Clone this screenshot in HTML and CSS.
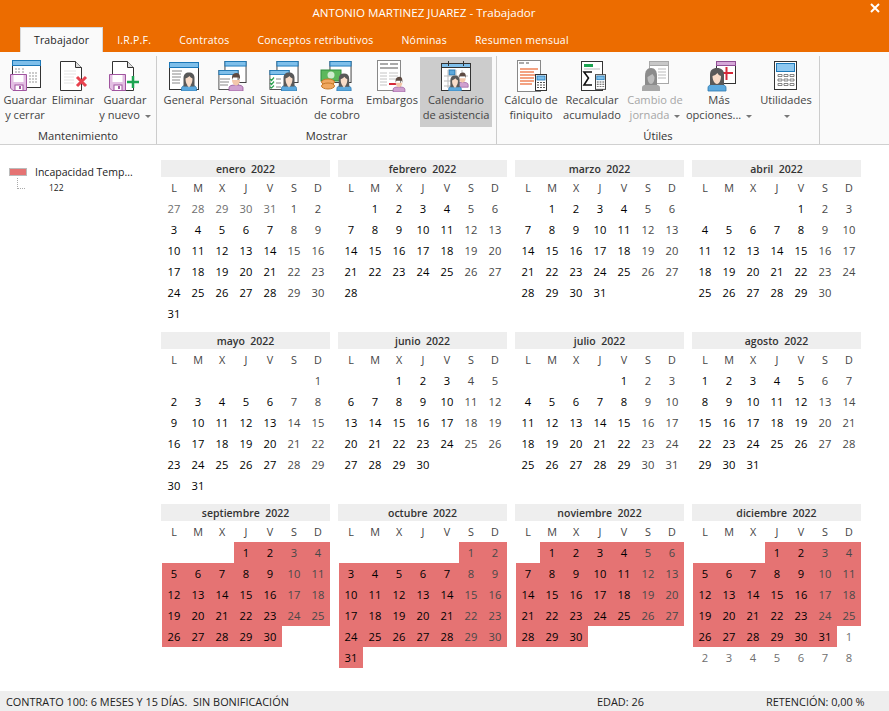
FILE: index.html
```html
<!DOCTYPE html>
<html lang="es">
<head>
<meta charset="utf-8">
<title>Trabajador</title>
<link rel="stylesheet" href="styles.css">
</head>
<body>
<svg class="sprite" aria-hidden="true">
  <symbol id="floppy" viewBox="0 0 17 17">
    <path d="M.5.5h16v16H3L.5 14z" fill="#e3bfe3" stroke="#a0559f"/>
    <rect x="3.500" y="1" width="10" height="7" fill="#fff"/>
    <rect x="5" y="11" width="8" height="5.500" fill="#fff" stroke="#a0559f"/>
    <rect x="9" y="12" width="2" height="3" fill="#a0559f"/>
  </symbol>
  <symbol id="woman" viewBox="0 0 16 19">
    <path d="M.5 19v-2.500c0-2.500 3-3.500 7.500-3.500s7.500 1 7.500 3.500V19z" fill="#5ba8dd" stroke="#2b78b0" stroke-width=".8"/>
    <path d="M2.500 14.500V6c0-3.500 2-5.500 5.500-5.500S13.500 2.500 13.500 6v8.500z" fill="#595959"/>
    <path d="M4.500 6.500c1.500-.5 3-1.200 4-2.500.5 1.200 2 2 3 2.500 0 3.500-1 7-3.500 7s-3.500-3.500-3.500-7z" fill="#f9dcc8"/>
    <path d="M6 13l2 2.500 2-2.500z" fill="#f9dcc8"/>
  </symbol>
  <symbol id="man" viewBox="0 0 16 19">
    <path d="M1 19v-3c0-2.500 3-3 7-3s7 .5 7 3v3z" fill="#cfa0cf" stroke="#95559a" stroke-width=".8"/>
    <path d="M4 8c0 3 2 5.500 4 5.500S12 11 12 8z" fill="#f3c7ab"/>
    <path d="M4 8V5c0-2.500 2-4 4.500-4S12 3 12 5v3l-1-2.500H5z" fill="#5d4a42"/>
  </symbol>
  <symbol id="calc" viewBox="0 0 12 17">
    <rect x=".5" y=".5" width="11" height="16" fill="#fff" stroke="#333"/>
    <rect x="2" y="2" width="8" height="4" fill="#7fbfea" stroke="#1c78b8" stroke-width=".8"/>
    <path d="M2 8h2v1H2zm3 0h2v1H5zm3 0h2v1H8zM2 10.500h2v1H2zm3 0h2v1H5zm3 0h2v1H8zM2 13h2v1H2zm3 0h2v1H5zm3 0h2v1H8z" fill="#555"/>
  </symbol>
  <symbol id="win" viewBox="0 0 24 24">
    <rect x=".5" y=".5" width="23" height="23" fill="#fff" stroke="#333"/>
    <rect x=".5" y=".5" width="23" height="5" fill="#7fbfea" stroke="#1c78b8"/>
  </symbol>
</svg>

<div class="app">
  <header class="titlebar">
    <div class="title">ANTONIO MARTINEZ JUAREZ - Trabajador</div>
    <svg class="close" viewBox="0 0 10 10"><path d="M1 1l8 8M9 1l-8 8" stroke="#fff" stroke-width="2"/></svg>
    <nav class="tabs">
      <span class="tab active">Trabajador</span>
      <span class="tab">I.R.P.F.</span>
      <span class="tab">Contratos</span>
      <span class="tab">Conceptos retributivos</span>
      <span class="tab">Nóminas</span>
      <span class="tab">Resumen mensual</span>
    </nav>
  </header>

  <section class="ribbon">
    <div class="group g1">
      <div class="btns">
        <div class="btn w46">
          <svg class="ico" viewBox="0 0 34 34">
            <rect x="4.500" y="2.500" width="28" height="27" fill="#fff" stroke="#333"/>
            <rect x="4.500" y="2.500" width="28" height="5" fill="#7fbfea" stroke="#1c78b8"/>
            <path d="M7 11h5M14 11h3M7 14h5M14 14h3M21 15h9M21 18h9M21 21h9M21 24h9" stroke="#999" stroke-dasharray="2 1"/>
            <use href="#floppy" x="2" y="16" width="17" height="17"/>
          </svg>
          <span>Guardar<br>y cerrar</span>
        </div>
        <div class="btn w50">
          <svg class="ico" viewBox="0 0 34 34">
            <path d="M4.500 3.500h15l6 6v23h-21z" fill="#fff" stroke="#333"/>
            <path d="M19.500 3.500v6h6" fill="#ddd" stroke="#333"/>
            <path d="M8 13h12M8 16h12M8 19h10M8 22h10M8 25h10" stroke="#e4e4e4"/>
            <path d="M21 19l9 9M30 19l-9 9" stroke="#e8434f" stroke-width="3"/>
          </svg>
          <span>Eliminar</span>
        </div>
        <div class="btn w54">
          <svg class="ico" viewBox="0 0 34 34">
            <path d="M4.500 3.500h15l6 6v23h-21z" fill="#fff" stroke="#333"/>
            <path d="M19.500 3.500v6h6" fill="#ddd" stroke="#333"/>
            <use href="#floppy" x="1" y="16" width="17" height="17"/>
            <path d="M19 24h12M25 18v12" stroke="#1ca451" stroke-width="2.500"/>
          </svg>
          <span>Guardar<br>y nuevo <i class="caret"></i></span>
        </div>
      </div>
      <div class="glabel">Mantenimiento</div>
    </div>

    <div class="group g2">
      <div class="btns">
        <div class="btn w44">
          <svg class="ico" viewBox="0 0 34 34">
            <rect x="2.500" y="4.500" width="29" height="27" fill="#fff" stroke="#333"/>
            <rect x="2.500" y="4.500" width="29" height="5" fill="#7fbfea" stroke="#1c78b8"/>
            <path d="M5 13h10M5 16h9M5 19h9M5 22h8M5 25h8" stroke="#888"/>
            <use href="#woman" x="14" y="14" width="16" height="19"/>
          </svg>
          <span>General</span>
        </div>
        <div class="btn w52">
          <svg class="ico" viewBox="0 0 34 34">
            <use href="#win" x="9" y="3" width="23" height="22"/>
            <use href="#win" x="2" y="12" width="23" height="20"/>
            <path d="M5 21h10M5 24h9M5 27h8" stroke="#888"/>
            <use href="#man" x="13" y="14" width="16" height="19"/>
          </svg>
          <span>Personal</span>
        </div>
        <div class="btn w52">
          <svg class="ico" viewBox="0 0 34 34">
            <use href="#win" x="9" y="3" width="23" height="22"/>
            <use href="#win" x="1" y="12" width="23" height="20"/>
            <path d="M3 21l1.500 1.500L7 19.500M3 25l1.500 1.500L7 23.500M3 29l1.500 1L7 27.500" stroke="#2aa24f" fill="none" stroke-width="1.200"/>
            <path d="M9 21h5M9 25h5M9 29h5" stroke="#888"/>
            <use href="#woman" x="14" y="14" width="16" height="19"/>
          </svg>
          <span>Situación</span>
        </div>
        <div class="btn w54">
          <svg class="ico" viewBox="0 0 34 34">
            <use href="#win" x="9" y="3" width="23" height="22"/>
            <rect x="1" y="12" width="20" height="11" fill="#5cb85c" stroke="#2e8b3e"/>
            <circle cx="11" cy="17" r="3.500" fill="#cfeccf"/>
            <ellipse cx="8" cy="24" rx="6.500" ry="3" fill="#f0a860" stroke="#c87a28"/>
            <ellipse cx="8" cy="28" rx="6.500" ry="3" fill="#f0a860" stroke="#c87a28"/>
            <use href="#woman" x="16" y="15" width="16" height="18"/>
          </svg>
          <span>Forma<br>de cobro</span>
        </div>
        <div class="btn w56">
          <svg class="ico" viewBox="0 0 34 34">
            <rect x="2.500" y="2.500" width="23" height="30" fill="#fff" stroke="#888"/>
            <path d="M5 6h8M15 6h8M5 10h18" stroke="#aaa" stroke-width="2"/>
            <path d="M5 15h7M14 15h9M5 18h7M14 18h9M5 21h7M14 21h9M5 24h7M5 27h7" stroke="#c4c4c4"/>
            <rect x="14" y="25" width="8" height="2" fill="#d62839"/>
            <use href="#man" x="17" y="18" width="14" height="16"/>
          </svg>
          <span>Embargos</span>
        </div>
        <div class="btn w72 selected">
          <svg class="ico" viewBox="0 0 34 34">
            <rect x="2.500" y="5.500" width="29" height="27" fill="#fff" stroke="#333"/>
            <rect x="2.500" y="5.500" width="29" height="4" fill="#7fbfea" stroke="#333"/>
            <path d="M9.500 3v5M24.500 3v5" stroke="#333"/>
            <rect x="10" y="12" width="6" height="5" fill="#5ba8dd" stroke="#2b78b0"/>
            <path d="M5 18h24M5 23h10M5 28h8M9 12v18M17 12v6M23 12v5" stroke="#bbb"/>
            <use href="#man" x="17" y="13" width="13" height="17"/>
            <use href="#woman" x="9" y="17" width="14" height="16"/>
          </svg>
          <span>Calendario<br>de asistencia</span>
        </div>
      </div>
      <div class="glabel">Mostrar</div>
    </div>

    <div class="group g3">
      <div class="btns">
        <div class="btn w62">
          <svg class="ico" viewBox="0 0 34 34">
            <rect x="3.500" y="2.500" width="23" height="31" fill="#fff" stroke="#888"/>
            <path d="M5 5h5M12 5h3" stroke="#aaa" stroke-width="2"/>
            <path d="M6 11h18M6 14h14M6 17h18M6 20h14M6 23h14M6 26h12" stroke="#f0845a" stroke-width="1.500"/>
            <use href="#calc" x="21" y="16" width="12" height="17"/>
          </svg>
          <span>Cálculo de<br>finiquito</span>
        </div>
        <div class="btn w60">
          <svg class="ico" viewBox="0 0 34 34">
            <rect x="6.500" y="3.500" width="21" height="29" fill="#fff" stroke="#333"/>
            <rect x="9" y="6" width="9" height="3" fill="#1ca451"/>
            <path d="M9 11h16" stroke="#bbb"/>
            <path d="M17 14H9l4.500 6L9 27h8" fill="none" stroke="#111" stroke-width="1.600"/>
            <use href="#calc" x="20" y="16" width="11" height="16"/>
          </svg>
          <span>Recalcular<br>acumulado</span>
        </div>
        <div class="btn w66 disabled">
          <svg class="ico" viewBox="0 0 34 34">
            <rect x="11.500" y="3.500" width="19" height="22" fill="#fff" stroke="#a8a8a8"/>
            <rect x="11.500" y="3.500" width="19" height="4" fill="#c8c8c8" stroke="#a8a8a8"/>
            <path d="M20 11h8M20 14h8M20 17h8M20 20h8" stroke="#bbb"/>
            <path d="M4 33v-3c0-3 3-4 9-4s9 1 9 4v3z" fill="#a8a8a8"/>
            <path d="M7 27V18c0-5 2-8 6-8s6 3 6 8v9z" fill="#8c8c8c"/>
            <path d="M9.500 19l5-3 2 3c0 4-1.500 7-3.500 7s-3.500-3-3.500-7z" fill="#bdbdbd"/>
          </svg>
          <span>Cambio de<br>jornada <i class="caret"></i></span>
        </div>
        <div class="btn w62">
          <svg class="ico" viewBox="0 0 34 34">
            <rect x="14.500" y="3.500" width="19" height="22" fill="#fff" stroke="#333"/>
            <rect x="14.500" y="3.500" width="19" height="4" fill="#d5a8d8" stroke="#8f4f94"/>
            <path d="M18 15h13M24.500 9v13" stroke="#d62839" stroke-width="2"/>
            <path d="M6 33v-3c0-3 3-4 9-4s9 1 9 4v3z" fill="#5ba8dd" stroke="#2b78b0" stroke-width=".8"/>
            <path d="M8 27V17c0-5 2.500-7 7-7s7 2 7 7v10z" fill="#595959"/>
            <path d="M10.500 18c2-.5 3.500-1.500 5-3 .5 1.500 2 2.500 3.500 3 0 4-1.500 8-4 8s-4.500-4-4.500-8z" fill="#f9dcc8"/>
          </svg>
          <span>Más<br>opciones... <i class="caret"></i></span>
        </div>
        <div class="btn w64 util">
          <svg class="ico" viewBox="0 0 34 34">
            <rect x="5.500" y="3.500" width="22" height="28" fill="#fff" stroke="#333"/>
            <rect x="7.500" y="5.500" width="18" height="8" fill="#8ec8f0" stroke="#1c78b8"/>
            <path d="M9 16.500h4v2H9zm6 0h4v2h-4zm6 0h4v2h-4zM9 21h4v2H9zm6 0h4v2h-4zm6 0h4v2h-4zM9 25.500h4v2H9zm6 0h4v2h-4zm6 0h4v2h-4z" fill="#fff" stroke="#666" stroke-width=".8"/>
          </svg>
          <span>Utilidades<br><i class="caret"></i></span>
        </div>
      </div>
      <div class="glabel">Útiles</div>
    </div>
  </section>

  <main class="content">
    <aside class="legend">
      <div class="legend-row"><i class="swatch"></i><span>Incapacidad Temp...</span></div>
      <div class="legend-sub"><i class="tree"></i><span>122</span></div>
    </aside>

    <div class="year">
      <div class="month">
        <div class="mname">enero&nbsp; 2022</div>
        <div class="dow"><span>L</span><span>M</span><span>X</span><span>J</span><span>V</span><span>S</span><span>D</span></div>
        <div class="days"><span class="o">27</span><span class="o">28</span><span class="o">29</span><span class="o">30</span><span class="o">31</span><span>1</span><span>2</span><span>3</span><span>4</span><span>5</span><span>6</span><span>7</span><span>8</span><span>9</span><span>10</span><span>11</span><span>12</span><span>13</span><span>14</span><span>15</span><span>16</span><span>17</span><span>18</span><span>19</span><span>20</span><span>21</span><span>22</span><span>23</span><span>24</span><span>25</span><span>26</span><span>27</span><span>28</span><span>29</span><span>30</span><span>31</span></div>
      </div>
      <div class="month">
        <div class="mname">febrero&nbsp; 2022</div>
        <div class="dow"><span>L</span><span>M</span><span>X</span><span>J</span><span>V</span><span>S</span><span>D</span></div>
        <div class="days"><span></span><span>1</span><span>2</span><span>3</span><span>4</span><span>5</span><span>6</span><span>7</span><span>8</span><span>9</span><span>10</span><span>11</span><span>12</span><span>13</span><span>14</span><span>15</span><span>16</span><span>17</span><span>18</span><span>19</span><span>20</span><span>21</span><span>22</span><span>23</span><span>24</span><span>25</span><span>26</span><span>27</span><span>28</span></div>
      </div>
      <div class="month">
        <div class="mname">marzo&nbsp; 2022</div>
        <div class="dow"><span>L</span><span>M</span><span>X</span><span>J</span><span>V</span><span>S</span><span>D</span></div>
        <div class="days"><span></span><span>1</span><span>2</span><span>3</span><span>4</span><span>5</span><span>6</span><span>7</span><span>8</span><span>9</span><span>10</span><span>11</span><span>12</span><span>13</span><span>14</span><span>15</span><span>16</span><span>17</span><span>18</span><span>19</span><span>20</span><span>21</span><span>22</span><span>23</span><span>24</span><span>25</span><span>26</span><span>27</span><span>28</span><span>29</span><span>30</span><span>31</span></div>
      </div>
      <div class="month">
        <div class="mname">abril&nbsp; 2022</div>
        <div class="dow"><span>L</span><span>M</span><span>X</span><span>J</span><span>V</span><span>S</span><span>D</span></div>
        <div class="days"><span></span><span></span><span></span><span></span><span>1</span><span>2</span><span>3</span><span>4</span><span>5</span><span>6</span><span>7</span><span>8</span><span>9</span><span>10</span><span>11</span><span>12</span><span>13</span><span>14</span><span>15</span><span>16</span><span>17</span><span>18</span><span>19</span><span>20</span><span>21</span><span>22</span><span>23</span><span>24</span><span>25</span><span>26</span><span>27</span><span>28</span><span>29</span><span>30</span></div>
      </div>
      <div class="month">
        <div class="mname">mayo&nbsp; 2022</div>
        <div class="dow"><span>L</span><span>M</span><span>X</span><span>J</span><span>V</span><span>S</span><span>D</span></div>
        <div class="days"><span></span><span></span><span></span><span></span><span></span><span></span><span>1</span><span>2</span><span>3</span><span>4</span><span>5</span><span>6</span><span>7</span><span>8</span><span>9</span><span>10</span><span>11</span><span>12</span><span>13</span><span>14</span><span>15</span><span>16</span><span>17</span><span>18</span><span>19</span><span>20</span><span>21</span><span>22</span><span>23</span><span>24</span><span>25</span><span>26</span><span>27</span><span>28</span><span>29</span><span>30</span><span>31</span></div>
      </div>
      <div class="month">
        <div class="mname">junio&nbsp; 2022</div>
        <div class="dow"><span>L</span><span>M</span><span>X</span><span>J</span><span>V</span><span>S</span><span>D</span></div>
        <div class="days"><span></span><span></span><span>1</span><span>2</span><span>3</span><span>4</span><span>5</span><span>6</span><span>7</span><span>8</span><span>9</span><span>10</span><span>11</span><span>12</span><span>13</span><span>14</span><span>15</span><span>16</span><span>17</span><span>18</span><span>19</span><span>20</span><span>21</span><span>22</span><span>23</span><span>24</span><span>25</span><span>26</span><span>27</span><span>28</span><span>29</span><span>30</span></div>
      </div>
      <div class="month">
        <div class="mname">julio&nbsp; 2022</div>
        <div class="dow"><span>L</span><span>M</span><span>X</span><span>J</span><span>V</span><span>S</span><span>D</span></div>
        <div class="days"><span></span><span></span><span></span><span></span><span>1</span><span>2</span><span>3</span><span>4</span><span>5</span><span>6</span><span>7</span><span>8</span><span>9</span><span>10</span><span>11</span><span>12</span><span>13</span><span>14</span><span>15</span><span>16</span><span>17</span><span>18</span><span>19</span><span>20</span><span>21</span><span>22</span><span>23</span><span>24</span><span>25</span><span>26</span><span>27</span><span>28</span><span>29</span><span>30</span><span>31</span></div>
      </div>
      <div class="month">
        <div class="mname">agosto&nbsp; 2022</div>
        <div class="dow"><span>L</span><span>M</span><span>X</span><span>J</span><span>V</span><span>S</span><span>D</span></div>
        <div class="days"><span>1</span><span>2</span><span>3</span><span>4</span><span>5</span><span>6</span><span>7</span><span>8</span><span>9</span><span>10</span><span>11</span><span>12</span><span>13</span><span>14</span><span>15</span><span>16</span><span>17</span><span>18</span><span>19</span><span>20</span><span>21</span><span>22</span><span>23</span><span>24</span><span>25</span><span>26</span><span>27</span><span>28</span><span>29</span><span>30</span><span>31</span></div>
      </div>
      <div class="month">
        <div class="mname">septiembre&nbsp; 2022</div>
        <div class="dow"><span>L</span><span>M</span><span>X</span><span>J</span><span>V</span><span>S</span><span>D</span></div>
        <div class="days hi"><span class="e"></span><span class="e"></span><span class="e"></span><span>1</span><span>2</span><span>3</span><span>4</span><span>5</span><span>6</span><span>7</span><span>8</span><span>9</span><span>10</span><span>11</span><span>12</span><span>13</span><span>14</span><span>15</span><span>16</span><span>17</span><span>18</span><span>19</span><span>20</span><span>21</span><span>22</span><span>23</span><span>24</span><span>25</span><span>26</span><span>27</span><span>28</span><span>29</span><span>30</span></div>
      </div>
      <div class="month">
        <div class="mname">octubre&nbsp; 2022</div>
        <div class="dow"><span>L</span><span>M</span><span>X</span><span>J</span><span>V</span><span>S</span><span>D</span></div>
        <div class="days hi"><span class="e"></span><span class="e"></span><span class="e"></span><span class="e"></span><span class="e"></span><span>1</span><span>2</span><span>3</span><span>4</span><span>5</span><span>6</span><span>7</span><span>8</span><span>9</span><span>10</span><span>11</span><span>12</span><span>13</span><span>14</span><span>15</span><span>16</span><span>17</span><span>18</span><span>19</span><span>20</span><span>21</span><span>22</span><span>23</span><span>24</span><span>25</span><span>26</span><span>27</span><span>28</span><span>29</span><span>30</span><span>31</span></div>
      </div>
      <div class="month">
        <div class="mname">noviembre&nbsp; 2022</div>
        <div class="dow"><span>L</span><span>M</span><span>X</span><span>J</span><span>V</span><span>S</span><span>D</span></div>
        <div class="days hi"><span class="e"></span><span>1</span><span>2</span><span>3</span><span>4</span><span>5</span><span>6</span><span>7</span><span>8</span><span>9</span><span>10</span><span>11</span><span>12</span><span>13</span><span>14</span><span>15</span><span>16</span><span>17</span><span>18</span><span>19</span><span>20</span><span>21</span><span>22</span><span>23</span><span>24</span><span>25</span><span>26</span><span>27</span><span>28</span><span>29</span><span>30</span></div>
      </div>
      <div class="month">
        <div class="mname">diciembre&nbsp; 2022</div>
        <div class="dow"><span>L</span><span>M</span><span>X</span><span>J</span><span>V</span><span>S</span><span>D</span></div>
        <div class="days hi"><span class="e"></span><span class="e"></span><span class="e"></span><span>1</span><span>2</span><span>3</span><span>4</span><span>5</span><span>6</span><span>7</span><span>8</span><span>9</span><span>10</span><span>11</span><span>12</span><span>13</span><span>14</span><span>15</span><span>16</span><span>17</span><span>18</span><span>19</span><span>20</span><span>21</span><span>22</span><span>23</span><span>24</span><span>25</span><span>26</span><span>27</span><span>28</span><span>29</span><span>30</span><span class="n">31</span><span class="e o">1</span><span class="e o">2</span><span class="e o">3</span><span class="e o">4</span><span class="e o">5</span><span class="e o">6</span><span class="e o">7</span><span class="e o">8</span></div>
      </div>
    </div>
  </main>

  <footer class="status">
    <span>CONTRATO 100: 6 MESES Y 15 DÍAS.&nbsp; SIN BONIFICACIÓN</span>
    <span>EDAD: 26</span>
    <span>RETENCIÓN: 0,00 %</span>
  </footer>
</div>
</body>
</html>
```

FILE: styles.css
```css
* { box-sizing: border-box; }
html, body { margin: 0; height: 100%; overflow: hidden; }
body {
  font-family: "Open Sans", "Noto Sans", "Liberation Sans", sans-serif;
  font-size: 11.200px;
  color: #222;
  background: #fff;
}
.sprite { position: absolute; width: 0; height: 0; }
.app { display: flex; flex-direction: column; height: 711px; }

.titlebar { position: relative; flex: none; height: 52px; background: #ec6c00; color: #fff; }
.title { height: 27px; padding-right: 41px; text-align: center; line-height: 26px; font-size: 11.600px; }
.close { position: absolute; top: 3px; right: 9px; width: 10px; height: 10px; }
.tabs { display: flex; padding-left: 20px; height: 25px; }
.tab { padding: 0 14px; line-height: 26px; font-size: 10.500px; letter-spacing: .22px; white-space: nowrap; }
.tab.active { margin-right: 0; padding: 0 13px; background: #fafafa; color: #222; border: 1px solid #d8d8d8; border-bottom: 0; line-height: 25px; letter-spacing: .15px; }

.ribbon { flex: none; display: flex; height: 93px; background: #fafafa; border-bottom: 1px solid #d0d0d0; color: #444; }
.group { display: flex; flex-direction: column; height: 88px; margin-top: 4px; border-right: 1px solid #ccc; }
.g1 { width: 157px; }
.g2 { width: 340px; }
.g3 { width: 323px; }
.btns { display: flex; height: 70px; margin-top: 1px; }
.g1 .btns { padding-left: 2px; }
.g2 .btns { padding-left: 5px; }
.g3 .btns { padding-left: 3px; }
.btn { display: flex; flex-direction: column; align-items: center; text-align: center; line-height: 15px; font-size: 11.100px; white-space: nowrap; }
.ico { flex: none; width: 34px; height: 34px; margin-top: 1px; }
.w44 { width: 44px; } .w46 { width: 46px; } .w50 { width: 50px; } .w52 { width: 52px; }
.w54 { width: 54px; } .w56 { width: 56px; } .w60 { width: 60px; } .w62 { width: 62px; }
.w64 { width: 64px; } .w66 { width: 66px; } .w72 { width: 72px; }
.util { margin-left: 4px; }
.selected { background: #cccccc; }
.disabled { color: #a6a6a6; }
.caret { display: inline-block; vertical-align: middle; margin-left: 2px; border: 3px solid transparent; border-top: 3px solid #777; border-bottom: 0; }
.glabel { margin-top: 1px; text-align: center; font-size: 11.200px; line-height: 15px; color: #333; }

.content { flex: 1; display: flex; padding-top: 15px; min-height: 0; }
.legend { flex: none; width: 161px; padding: 6px 0 0 9px; }
.legend-row { display: flex; align-items: center; gap: 8px; height: 11px; font-size: 10.500px; }
.swatch { width: 18px; height: 8px; background: #e57373; border: 1px solid #bbb; }
.legend-sub { display: flex; align-items: flex-start; margin-top: 1px; padding-left: 8px; font-size: 8.500px; color: #222; line-height: 19px; }
.tree { width: 8px; height: 11px; margin-right: 24px; border-left: 1px dotted #aaa; border-bottom: 1px dotted #aaa; }

.year { display: grid; grid-template-columns: repeat(4, 169px); grid-auto-rows: 164px; gap: 8px; }
.mname { height: 17px; background: #eeeeee; text-align: center; font-weight: 600; font-size: 10.500px; line-height: 19px; color: #333; }
.dow, .days { display: grid; grid-template-columns: repeat(7, 24px); grid-auto-rows: 21px; padding-left: 1px; text-align: center; line-height: 21px; }
.dow { color: #444; font-size: 10.800px; line-height: 21px; }
.days { color: #000; }
.days span:nth-child(7n+6), .days span:nth-child(7n) { color: #484848; }
.days .o, .days span.o:nth-child(n) { color: #6e6e6e; }
.days span.n:nth-child(n) { color: #000; }
.hi span { background: #e57373; }
.hi .e { background: none; }

.status { flex: none; display: grid; grid-template-columns: 591px 169px 1fr; height: 20px; padding-left: 6px; background: #eeeeee; line-height: 21px; font-size: 10.900px; color: #222; white-space: nowrap; }
```
